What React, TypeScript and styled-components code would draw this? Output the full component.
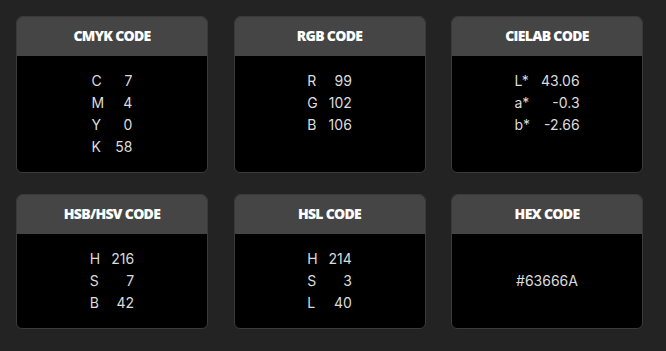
import React from "react";
import styled, { createGlobalStyle } from "styled-components";

const Global = createGlobalStyle`
  html, body { margin: 0; padding: 0; background: #232323; }
  body { font-family: Inter, "Open Sans", sans-serif; }
`;

const Page = styled.div`
  width: 666px;
  height: 351px;
  box-sizing: border-box;
  padding: 16px 0 0 16px;
  display: grid;
  grid-template-columns: repeat(3, 192px);
  grid-auto-rows: auto;
  column-gap: 25.5px;
  row-gap: 21px;
  align-content: start;
`;

const Card = styled.div`
  display: flex;
  flex-direction: column;
  border: 1px solid #3a3a3a;
  border-radius: 6px;
  overflow: hidden;
  background: #000;
`;

const Header = styled.div`
  height: 39px;
  box-sizing: border-box;
  padding-bottom: 2px;
  background: #454545;
  display: flex;
  align-items: center;
  justify-content: center;
  color: #fff;
  font-family: "Open Sans", sans-serif;
  font-weight: 800;
  font-size: 14px;
  letter-spacing: -0.7px;
`;

const Body = styled.div<{ $center?: boolean }>`
  flex: 1;
  display: flex;
  align-items: ${(p) => (p.$center ? "center" : "flex-start")};
  justify-content: center;
  padding: 13px 0 15px;
`;

const Table = styled.div`
  display: grid;
  grid-template-columns: auto auto;
  column-gap: 11px;
  grid-auto-rows: 22px;
  align-items: center;
  color: #dcdcdc;
  font-size: 14px;
`;

const Label = styled.span`
  text-align: left;
`;

const Value = styled.span`
  text-align: right;
`;

const Hex = styled.span`
  color: #dcdcdc;
  font-size: 14px;
`;

type Row = [string, string];
const cards: { title: string; rows?: Row[]; hex?: string }[] = [
  { title: "CMYK CODE", rows: [["C", "7"], ["M", "4"], ["Y", "0"], ["K", "58"]] },
  { title: "RGB CODE", rows: [["R", "99"], ["G", "102"], ["B", "106"]] },
  { title: "CIELAB CODE", rows: [["L*", "43.06"], ["a*", "-0.3"], ["b*", "-2.66"]] },
  { title: "HSB/HSV CODE", rows: [["H", "216"], ["S", "7"], ["B", "42"]] },
  { title: "HSL CODE", rows: [["H", "214"], ["S", "3"], ["L", "40"]] },
  { title: "HEX CODE", hex: "#63666A" },
];

export default function App() {
  return (
    <>
      <Global />
      <Page>
        {cards.map((c) => (
          <Card key={c.title}>
            <Header>{c.title}</Header>
            <Body $center={!c.rows}>
              {c.rows ? (
                <Table>
                  {c.rows.map(([l, v]) => (
                    <React.Fragment key={l}>
                      <Label>{l}</Label>
                      <Value>{v}</Value>
                    </React.Fragment>
                  ))}
                </Table>
              ) : (
                <Hex>{c.hex}</Hex>
              )}
            </Body>
          </Card>
        ))}
      </Page>
    </>
  );
}
